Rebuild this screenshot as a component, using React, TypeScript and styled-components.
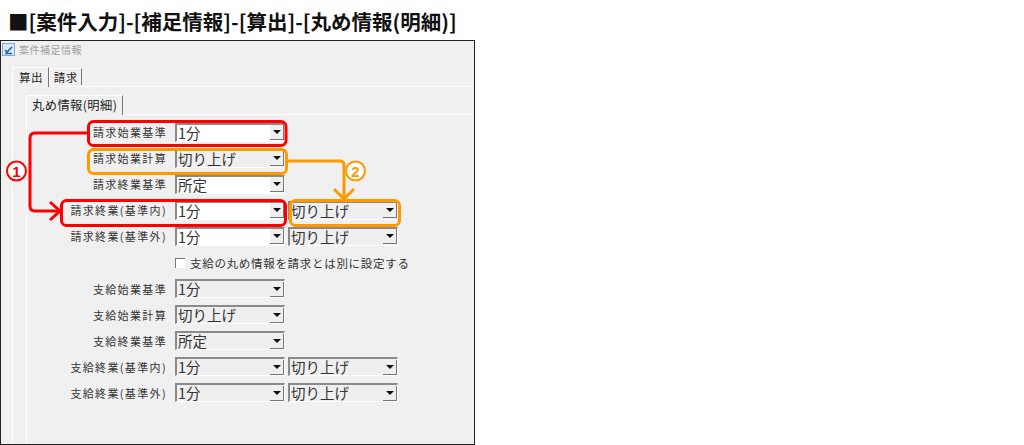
import React from "react";
import styled, { createGlobalStyle } from "styled-components";

const Global = createGlobalStyle`
  html, body { margin: 0; padding: 0; background: #fff; }
  body { width: 1024px; height: 445px; overflow: hidden; font-family: "Noto Sans CJK JP", "Liberation Sans", sans-serif; }
`;
const Page = styled.div`
  position: relative;
  width: 1024px;
  height: 445px;
  display: flex;
  flex-direction: column;
  box-sizing: border-box;
`;
const Heading = styled.h1`
  margin: 0;
  height: 40px;
  box-sizing: border-box;
  padding: 9px 0 0 8px;
  font-size: 20.5px;
  line-height: 24px;
  font-weight: 700;
  color: #111;
  white-space: nowrap;
`;
const Win = styled.div`
  width: 475px;
  height: 405px;
  box-sizing: border-box;
  border: 1px solid #222;
  background: #f0f0f0;
  display: flex;
  flex-direction: column;
`;
const TitleBar = styled.div`
  height: 17px;
  display: flex;
  align-items: center;
  gap: 4px;
  padding-left: 1px;
  font-size: 10px;
  letter-spacing: .5px;
  color: #a0a0a0;
`;
const TabRow = styled.div<{ $height: number; $left: number }>`
  display: flex;
  align-items: flex-end;
  height: ${p => p.$height}px;
  padding-left: ${p => p.$left}px;
`;
const Tab = styled.div<{ $active?: boolean; $wide?: boolean }>`
  height: ${p => (p.$active ? 20 : 17)}px;
  display: flex;
  align-items: center;
  padding: ${p => (p.$active ? `0 5px 2px ${p.$wide ? 5 : 6}px` : "0 3px 0 4px")};
  margin-bottom: ${p => (p.$active ? "-1px" : "1px")};
  box-sizing: border-box;
  font-size: ${p => (p.$wide ? 12.3 : 11.5)}px;
  letter-spacing: .4px;
  color: #222;
  border-top: 1px solid #fff;
  border-left: 1px solid #fff;
  border-right: 1px solid #777;
  background: #f0f0f0;
  position: relative;
  z-index: 1;
`;
const OuterPanel = styled.div`
  flex: 1;
  margin: 0 0 0 11px;
  border-top: 1px solid #fff;
  border-left: 1px solid #fff;
  display: flex;
  flex-direction: column;
  padding-left: 13px;
`;
const InnerPanel = styled.div`
  flex: 1;
  border-top: 1px solid #fff;
  border-left: 1px solid #fff;
  display: flex;
  flex-direction: column;
  padding-top: 4px;
`;
const Row = styled.div`
  height: 26.1px;
  display: flex;
  align-items: center;
`;
const Label = styled.div`
  width: 140px;
  flex: none;
  text-align: right;
  margin-right: 8px;
  font-size: 11px;
  letter-spacing: 1.35px;
  color: #333;
  white-space: nowrap;
`;
const Combo = styled.div<{ $white?: boolean }>`
  width: 110px;
  height: 19px;
  box-sizing: border-box;
  margin-right: 3px;
  border-top: 2px solid #8a8a8a;
  border-left: 2px solid #8a8a8a;
  border-right: 1px solid #fff;
  border-bottom: 1px solid #fff;
  background: ${p => (p.$white ? "#fff" : "#efefef")};
  display: flex;
  align-items: center;
  justify-content: space-between;
  font-size: 14.5px;
  line-height: 16px;
  color: #333;
  padding-left: 1px;
`;
const Arrow = styled.div`
  width: 14px;
  height: 15px;
  flex: none;
  box-sizing: border-box;
  background: #efefef;
  border-right: 1px solid #777;
  border-bottom: 1px solid #777;
  display: flex;
  align-items: center;
  justify-content: center;
  &::after {
    content: "";
    border-left: 4px solid transparent;
    border-right: 4px solid transparent;
    border-top: 4px solid #111;
  }
`;
const CheckRow = styled(Row)`
  padding-left: 148px;
  gap: 5px;
  font-size: 11.5px;
  letter-spacing: .7px;
  color: #333;
`;
const Check = styled.span`
  width: 10px;
  height: 10px;
  box-sizing: border-box;
  background: #fff;
  border-top: 1px solid #777;
  border-left: 1px solid #777;
`;
const Overlay = styled.svg`
  position: absolute;
  left: 0;
  top: 0;
  pointer-events: none;
`;

const rows: [string, string, boolean, boolean][] = [
  ["請求始業基準", "1分", true, false],
  ["請求始業計算", "切り上げ", false, false],
  ["請求終業基準", "所定", true, false],
  ["請求終業(基準内)", "1分", true, true],
  ["請求終業(基準外)", "1分", true, true],
];
const rows2: [string, string, boolean, boolean][] = [
  ["支給始業基準", "1分", false, false],
  ["支給始業計算", "切り上げ", false, false],
  ["支給終業基準", "所定", false, false],
  ["支給終業(基準内)", "1分", false, true],
  ["支給終業(基準外)", "1分", false, true],
];

function FormRow({ r }: { r: [string, string, boolean, boolean] }) {
  return (
    <Row>
      <Label>{r[0]}</Label>
      <Combo $white={r[2]}>{r[1]}<Arrow /></Combo>
      {r[3] && <Combo>切り上げ<Arrow /></Combo>}
    </Row>
  );
}

export default function App() {
  return (
    <Page>
      <Global />
      <Heading>■[案件入力]-[補足情報]-[算出]-[丸め情報(明細)]</Heading>
      <Win>
        <TitleBar>
          <svg width="13" height="13" viewBox="0 0 13 13">
            <rect x=".5" y=".5" width="12" height="12" fill="#dbe9f7" stroke="#7fa9d6" />
            <path d="M3 7l2 2 5-5M3 10.5h7" stroke="#1f62b0" strokeWidth="1.6" fill="none" />
          </svg>
          案件補足情報
        </TitleBar>
        <TabRow $height={28} $left={11}>
          <Tab $active>算出</Tab>
          <Tab>請求</Tab>
        </TabRow>
        <OuterPanel>
          <TabRow $height={27} $left={0}>
            <Tab $active $wide>丸め情報(明細)</Tab>
          </TabRow>
          <InnerPanel>
            {rows.map(r => <FormRow key={r[0]} r={r} />)}
            <CheckRow><Check />支給の丸め情報を請求とは別に設定する</CheckRow>
            {rows2.map(r => <FormRow key={r[0]} r={r} />)}
          </InnerPanel>
        </OuterPanel>
      </Win>
      <Overlay width="1024" height="445" viewBox="0 0 1024 445" fill="none">
        <g stroke="#f00" strokeWidth="3">
          <rect x="88.5" y="121.5" width="197.5" height="24" rx="5" />
          <rect x="61.5" y="200.5" width="224" height="25" rx="5" />
          <path d="M88 133H35q-5 0-5 5v68q0 5 5 5h24" />
          <path d="M50 202l10 9-10 9" />
        </g>
        <g stroke="#f90" strokeWidth="3">
          <rect x="88.5" y="149.5" width="198" height="24" rx="5" />
          <rect x="290.5" y="200.5" width="109" height="25" rx="5" />
          <path d="M287 161h53q4 0 4 4v32" />
          <path d="M334 189l10 10 10-10" />
        </g>
        <circle cx="16.5" cy="171" r="9.5" fill="#fff" stroke="#f00" strokeWidth="2" />
        <text x="16.5" y="176.5" textAnchor="middle" fontSize="15" fontWeight="700" fill="#f00" fontFamily="Liberation Sans" stroke="none">1</text>
        <circle cx="355.5" cy="171" r="9.5" fill="#fff" stroke="#f90" strokeWidth="2" />
        <text x="355.5" y="176.5" textAnchor="middle" fontSize="15" fontWeight="700" fill="#f90" fontFamily="Liberation Sans" stroke="none">2</text>
      </Overlay>
    </Page>
  );
}
